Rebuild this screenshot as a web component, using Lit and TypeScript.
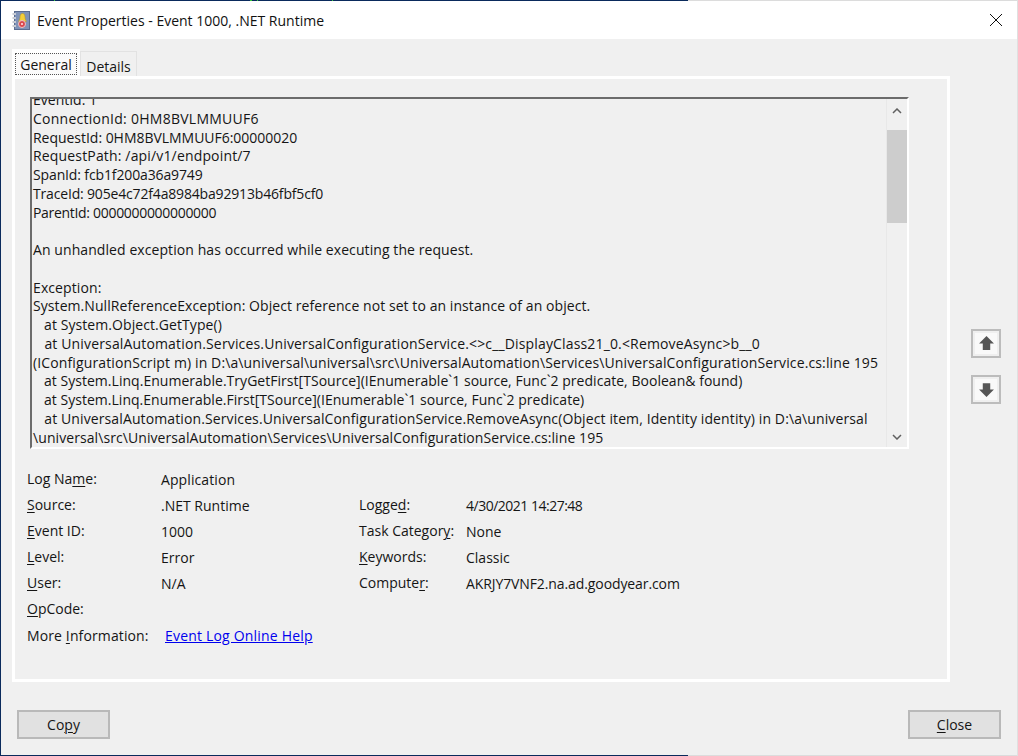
import { LitElement, html, css } from "lit";
import { customElement } from "lit/decorators.js";

const LINES: [string, number][] = [
  ["EventId: 1", 0],
  ["ConnectionId: 0HM8BVLMMUUF6", 0.26],
  ["RequestId: 0HM8BVLMMUUF6:00000020", -0.03],
  ["RequestPath: /api/v1/endpoint/7", 0.16],
  ["SpanId: fcb1f200a36a9749", -0.13],
  ["TraceId: 905e4c72f4a8984ba92913b46fbf5cf0", -0.17],
  ["ParentId: 0000000000000000", -0.31],
  ["\u00a0", 0],
  ["An unhandled exception has occurred while executing the request.", 0.08],
  ["\u00a0", 0],
  ["Exception:", 0.1],
  ["System.NullReferenceException: Object reference not set to an instance of an object.", 0.07],
  ["   at System.Object.GetType()", 0.07],
  ["   at UniversalAutomation.Services.UniversalConfigurationService.<>c__DisplayClass21_0.<RemoveAsync>b__0", 0.155],
  ["(IConfigurationScript m) in D:\\a\\universal\\universal\\src\\UniversalAutomation\\Services\\UniversalConfigurationService.cs:line 195", 0.124],
  ["   at System.Linq.Enumerable.TryGetFirst[TSource](IEnumerable`1 source, Func`2 predicate, Boolean& found)", 0.03],
  ["   at System.Linq.Enumerable.First[TSource](IEnumerable`1 source, Func`2 predicate)", 0.025],
  ["   at UniversalAutomation.Services.UniversalConfigurationService.RemoveAsync(Object item, Identity identity) in D:\\a\\universal", 0.114],
  ["\\universal\\src\\UniversalAutomation\\Services\\UniversalConfigurationService.cs:line 195", 0.08],
];

@customElement("app-root")
export class AppRoot extends LitElement {
  static styles = css`
    :host {
      display: block;
      width: 1018px;
      height: 756px;
      overflow: hidden;
      position: relative;
      font-family: "Open Sans", "Noto Sans", sans-serif;
      font-size: 14px;
      color: #151515;
    }
    .window {
      box-sizing: border-box;
      width: 1018px;
      height: 756px;
      background: #f0f0f0;
      border-left: 1px solid #0a2a5c;
      border-right: 1px solid #e0e0e0;
      display: flex;
      flex-direction: column;
    }
    .edge {
      height: 1px;
      flex: none;
      background: linear-gradient(90deg, #0a2a5c 687px, #dcdcdc 687px);
    }
    .edge.top {
      background: linear-gradient(
        90deg,
        #0a2a5c 53px, #35c935 53px, #35c935 54px,
        #0a2a5c 54px, #0a2a5c 249px, #35c935 249px, #35c935 251px,
        #0a2a5c 251px, #0a2a5c 256px, #35c935 256px, #35c935 257px,
        #0a2a5c 257px, #0a2a5c 331px, #35c935 331px, #35c935 332px,
        #0a2a5c 332px, #0a2a5c 687px, #dcdcdc 687px
      );
    }
    .title {
      height: 38px;
      flex: none;
      background: #fff;
      display: flex;
      align-items: center;
      padding-left: 11px;
      gap: 7px;
      color: #111;
    }
    .title .t { flex: 1; font-size: 14px; }
    .title .x { width: 14px; height: 14px; margin-right: 14px; display: block; }
    .ticon { width: 18px; height: 19px; display: block; }
    .tabs {
      display: flex;
      align-items: flex-end;
      height: 37px;
      padding-left: 11px;
      flex: none;
    }
    .tab {
      box-sizing: border-box;
      height: 25px;
      width: 57px;
      border: 1px solid #e2e2e2;
      border-bottom: none;
      display: flex;
      align-items: center;
      justify-content: center;
      padding-top: 4px;
    }
    .tab.on {
      height: 29px;
      width: 68px;
      background: #fff;
      border: none;
      padding: 4px 3px 3px;
      position: relative;
      z-index: 1;
      margin-bottom: -2px;
    }
    .tab.on span {
      box-sizing: border-box;
      flex: 1;
      height: 100%;
      background: #fbfbfb;
      border: 1px dotted #555;
      display: flex;
      align-items: center;
      justify-content: center;
    }
    .panel {
      box-sizing: border-box;
      width: 938px;
      height: 606px;
      margin-left: 11px;
      flex: none;
      border: 3px solid #fff;
      padding: 18px 0 0 15px;
      display: flex;
      flex-direction: column;
    }
    .box {
      box-sizing: border-box;
      width: 879px;
      height: 352px;
      flex: none;
      border-top: 2px solid #6c6c6c;
      border-left: 2px solid #6c6c6c;
      border-right: 2px solid #fff;
      border-bottom: 2px solid #fff;
      display: flex;
      overflow: hidden;
    }
    .log {
      flex: 1;
      overflow: hidden;
      padding-left: 1px;
      line-height: 18.75px;
      white-space: pre;
      min-width: 0;
    }
    .log .inner { margin-top: -8px; }
    .bar {
      width: 21px;
      flex: none;
      border-left: 1px solid #e8e8e8;
      box-sizing: border-box;
      display: flex;
      flex-direction: column;
    }
    .arrow { height: 20px; flex: none; display: flex; align-items: center; justify-content: center; }
    .arrow.up { height: 23px; }
    .arrow svg { width: 10px; height: 6px; display: block; }
    .track { flex: 1; padding-top: 8px; }
    .thumb { height: 93px; background: #cdcdcd; }
    .info {
      display: grid;
      grid-template-columns: 134px 198px 107px 1fr;
      grid-auto-rows: 26px;
      margin-top: 18px;
      margin-left: -3px;
    }
    .info div { line-height: 26px; white-space: nowrap; }
    .lab { position: relative; top: -1px; }
    .info u { text-decoration-thickness: 1px; text-underline-offset: 2px; }
    .link { color: #0000ee; text-decoration: underline; letter-spacing: 0.19px; }
    .more { grid-column: 1 / -1; display: flex; }
    .more .name { width: 138px; flex: none; letter-spacing: 0.12px; }
    .move {
      position: absolute;
      left: 971px;
      width: 30px;
      height: 29px;
      box-sizing: border-box;
      border: 2px solid #bcbcbc;
      padding: 2px;
      background: #efefef;
      display: flex;
    }
    .move.a { top: 329px; }
    .move.b { top: 375px; }
    .move span { flex: 1; background: #f9f9f9; display: flex; align-items: center; justify-content: center; }
    .move svg { width: 17px; height: 17px; display: block; }
    .foot {
      flex: 1;
      display: flex;
      justify-content: space-between;
      align-items: flex-start;
      padding: 28px 16px 0 16px;
    }
    .btn {
      box-sizing: border-box;
      width: 93px;
      height: 29px;
      background: #e1e1e1;
      border: 2px solid #b9b9b9;
      display: flex;
      align-items: center;
      justify-content: center;
    }
    .btn u { text-decoration-thickness: 1px; text-underline-offset: 2px; }
  `;

  render() {
    const row = (lab: unknown, val: string, ls = 0) =>
      html`<div class="lab">${lab}</div><div style="letter-spacing:${ls}px">${val}</div>`;
    return html`
      <div class="window">
        <div class="edge top"></div>
        <div class="title">
          <svg class="ticon" viewBox="0 0 18 19">
            <rect x="2.500" y="0.500" width="15" height="18" fill="#7f93b8" stroke="#5a6c90" />
            <rect x="0.500" y="2" width="3.500" height="2" fill="#c8ccd4" />
            <rect x="0.500" y="6" width="3.500" height="2" fill="#c8ccd4" />
            <rect x="0.500" y="10" width="3.500" height="2" fill="#c8ccd4" />
            <rect x="0.500" y="14" width="3.500" height="2" fill="#c8ccd4" />
            <path d="M10.500 2.500c2 0 2.500 2 2.500 4s1 3 1.500 4h-8c.5-1 1.500-2 1.500-4s.5-4 2.500-4z" fill="#f4cf3a" stroke="#b5931e" stroke-width=".5" />
            <circle cx="10" cy="13" r="3.500" fill="#d9484f" stroke="#f0c4c4" />
            <circle cx="10" cy="13" r="1" fill="#fbe4e4" />
          </svg>
          <span class="t">Event Properties - Event 1000, .NET Runtime</span>
          <svg class="x" viewBox="0 0 14 14"><path d="M1 1l12 12M13 1L1 13" stroke="#111" stroke-width="1" fill="none" /></svg>
        </div>
        <div class="tabs">
          <div class="tab on"><span>General</span></div>
          <div class="tab">Details</div>
        </div>
        <div class="panel">
          <div class="box">
            <div class="log"><div class="inner">${LINES.map(([t, ls]) => html`<div style="letter-spacing:${ls}px">${t}</div>`)}</div></div>
            <div class="bar">
              <div class="arrow up"><svg viewBox="0 0 10 6"><path d="M1 5l4-4 4 4" fill="none" stroke="#606060" stroke-width="1.500" /></svg></div>
              <div class="track"><div class="thumb"></div></div>
              <div class="arrow"><svg viewBox="0 0 10 6"><path d="M1 1l4 4 4-4" fill="none" stroke="#606060" stroke-width="1.500" /></svg></div>
            </div>
          </div>
          <div class="info">
            ${row(html`Log Na<u>m</u>e:`, "Application", 0.1)}<div></div><div></div>
            ${row(html`<u>S</u>ource:`, ".NET Runtime")}${row(html`Logge<u>d</u>:`, "4/30/2021 14:27:48", -0.5)}
            ${row(html`<u>E</u>vent ID:`, "1000")}${row(html`Task Categor<u>y</u>:`, "None")}
            ${row(html`<u>L</u>evel:`, "Error")}${row(html`<u>K</u>eywords:`, "Classic")}
            ${row(html`<u>U</u>ser:`, "N/A")}${row(html`Compute<u>r</u>:`, "AKRJY7VNF2.na.ad.goodyear.com", -0.1)}
            <div class="lab"><u>O</u>pCode:</div><div></div><div></div><div></div>
            <div class="more"><div class="name">More <u>I</u>nformation:</div><a class="link">Event Log Online Help</a></div>
          </div>
        </div>
        <div class="foot">
          <div class="btn"><span>Co<u>p</u>y</span></div>
          <div class="btn"><span><u>C</u>lose</span></div>
        </div>
        <div class="edge"></div>
      </div>
      <div class="move a"><span><svg viewBox="0 0 16 16"><path d="M8 1l7 7h-3.500v6h-7V8H1z" fill="#555" /></svg></span></div>
      <div class="move b"><span><svg viewBox="0 0 16 16"><path d="M8 15l7-7h-3.500V2h-7v6H1z" fill="#555" /></svg></span></div>
    `;
  }
}
